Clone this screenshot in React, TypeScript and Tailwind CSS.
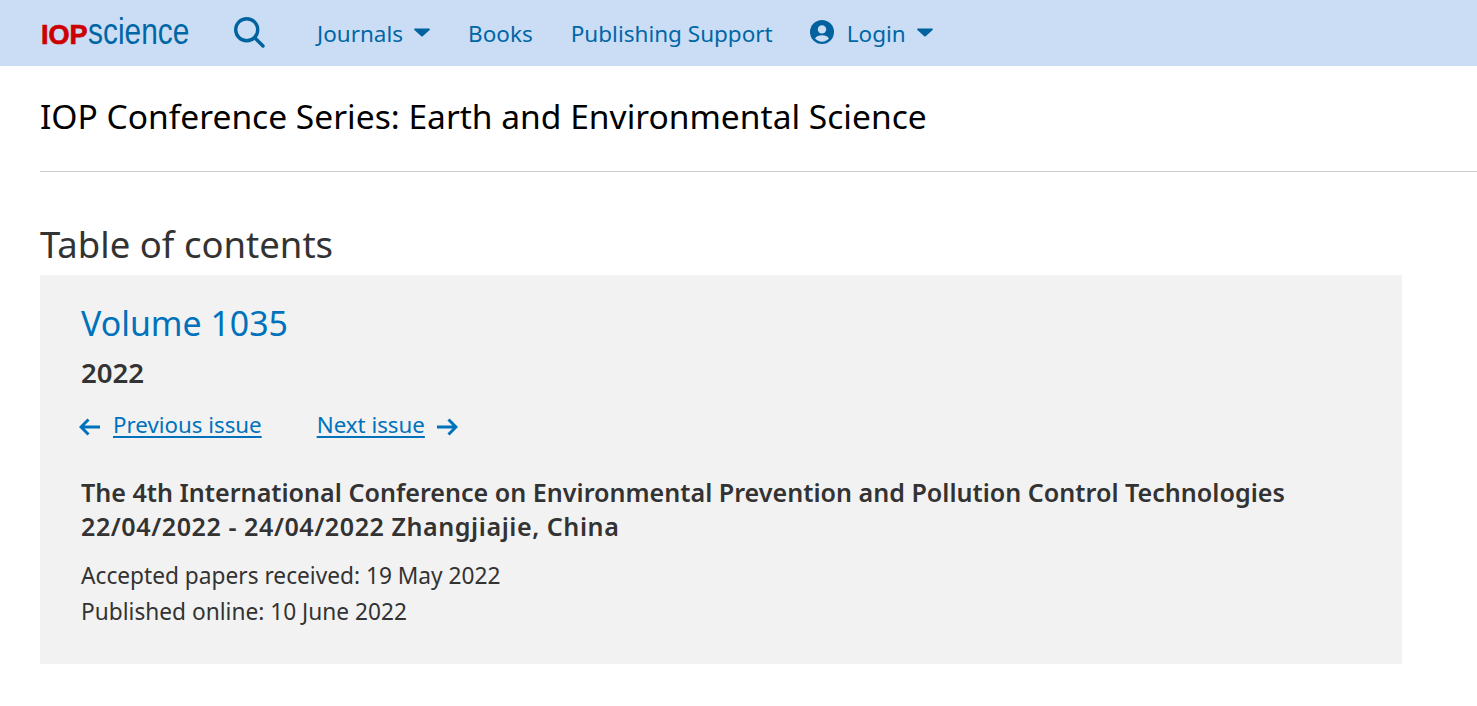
function Caret() {
  return (
    <svg width="16" height="9" viewBox="0 0 16 9" className="ml-[11px] mt-[-3px] shrink-0">
      <path d="M1 0.5h14c.8 0 1.2 1 .6 1.600L8.700 8.200c-.4.4-1 .4-1.400 0L.4 2.100C-.2 1.500.2.500 1 .5z" fill="#00629e" />
    </svg>
  );
}

function UserIcon() {
  return (
    <svg width="24" height="24" viewBox="0 0 24 24" className="mr-[13px] mt-[-5px] shrink-0">
      <circle cx="12" cy="12" r="12" fill="#00629e" />
      <circle cx="12" cy="9.400" r="4.200" fill="#cbddf5" />
      <path d="M5 18.600c1.400-2.400 3.800-3.400 7-3.400s5.600 1 7 3.400c-1.800 2-4.300 3.100-7 3.100s-5.200-1.100-7-3.100z" fill="#cbddf5" />
    </svg>
  );
}

function SearchIcon() {
  return (
    <svg width="31" height="31" viewBox="0 0 31 31" fill="none" stroke="#00629e" strokeWidth="3.400" strokeLinecap="round" className="ml-[43px] mt-[-3px] shrink-0">
      <circle cx="12.700" cy="12.700" r="11" />
      <path d="M21 21l8 8" />
    </svg>
  );
}

function Arrow({ right }: { right?: boolean }) {
  return (
    <svg width="21" height="18" viewBox="0 0 21 18" fill="none" stroke="#0072bc" strokeWidth="3" className={`shrink-0 mt-[3px] ${right ? 'ml-[12px] -scale-x-100' : 'ml-[-2px] mr-[13px]'}`}>
      <path d="M9.500 1.500L2 9l7.500 7.500M2 9h19" />
    </svg>
  );
}

export default function App() {
  return (
    <div className="min-h-[706px] bg-white font-['Noto_Sans',sans-serif] overflow-hidden">
      <header className="h-[66px] pt-[2px] bg-[#cbddf5] flex items-center pl-[41px] text-[#0067a5] text-[22.5px]">
        <a className="flex items-baseline w-[150px] leading-none font-['Liberation_Sans',sans-serif] mt-[-5px]">
          <span className="text-[#cc0000] font-bold text-[27px] [-webkit-text-stroke:0.7px_#cc0000]">IOP</span>
          <span className="text-[#0067a5] text-[36px] inline-block origin-left scale-x-[0.83]">science</span>
        </a>
        <SearchIcon />
        <a className="ml-[52px] flex items-center">Journals<Caret /></a>
        <a className="ml-[38px]">Books</a>
        <a className="ml-[38px]">Publishing Support</a>
        <a className="ml-[37px] flex items-center"><UserIcon />Login<Caret /></a>
      </header>

      <div className="pl-[40px]">
        <div className="h-[106px] border-b border-[#cccccc] flex items-start">
          <h1 className="text-[33.55px] leading-[46px] pt-[27px] text-black">IOP Conference Series: Earth and Environmental Science</h1>
        </div>

        <h2 className="text-[36.5px] leading-[48px] text-[#333333] mt-[48px]">Table of contents</h2>

        <section className="w-[1362px] h-[389px] mt-[7px] bg-[#f2f2f2] pl-[41px] pt-[24px] text-[#333333]">
          <h3 className="text-[33.9px] leading-[48px] text-[#0072bc]">Volume 1035</h3>
          <div className="text-[27.6px] leading-[36px] font-semibold mt-[7px]">2022</div>

          <div className="flex items-center mt-[19px] text-[22.3px] leading-[32px] text-[#0072bc]">
            <Arrow />
            <a className="underline underline-offset-[3px]">Previous issue</a>
            <a className="underline underline-offset-[3px] ml-[55px]">Next issue</a>
            <Arrow right />
          </div>

          <div className="mt-[34px] text-[25.1px] leading-[34px] font-semibold">
            <p>The 4th International Conference on Environmental Prevention and Pollution Control Technologies</p>
            <p className="tracking-[0.55px]">22/04/2022 - 24/04/2022 Zhangjiajie, China</p>
          </div>

          <div className="mt-[15px] text-[22.7px] leading-[36px]">
            <p>Accepted papers received: 19 May 2022</p>
            <p>Published online: 10 June 2022</p>
          </div>
        </section>
      </div>
    </div>
  );
}
